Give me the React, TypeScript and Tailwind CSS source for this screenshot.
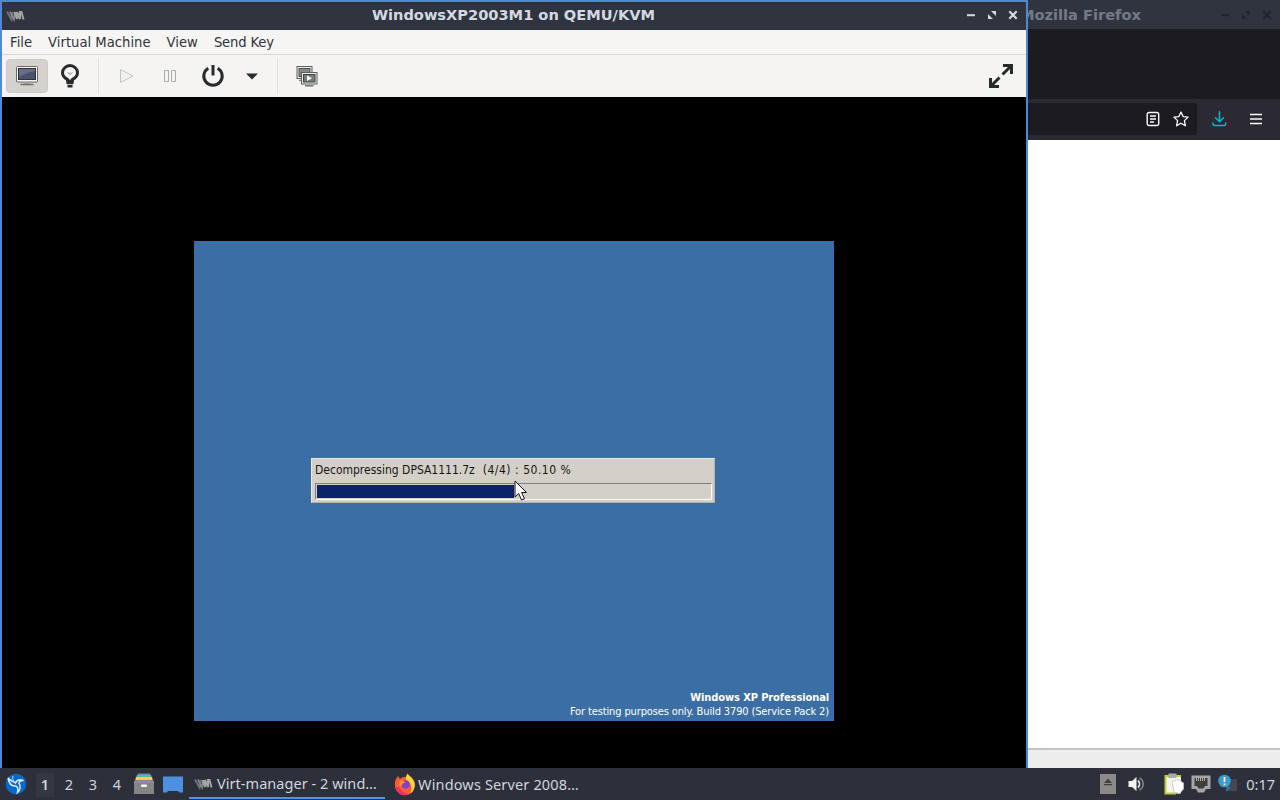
import React from 'react';

const workspaces = ['1', '2', '3', '4'];
const progress = 50.1;

function VmLogo() {
  return (
    <svg className="w-[20px] h-[12px] shrink-0" viewBox="0 0 20 12" fill="none">
      <path d="M1 1.5L5.5 9.5L7 2" stroke="#6f7175" strokeWidth="2" />
      <path d="M4 1.5L8 9.5L9.5 2" stroke="#85878a" strokeWidth="1.8" />
      <path d="M8.5 2L11 9V2L14 9V2H15.5L17.5 9.5" stroke="#a2a4a6" strokeWidth="2" />
    </svg>
  );
}

function WindowButtons({ color }: { color: string }) {
  return (
    <svg className="w-[54px] h-[14px] shrink-0" viewBox="0 0 54 14">
      <path d="M2 7.2H10" stroke={color} strokeWidth="2" />
      <path d="M26 3H31V8ZM23 6V11H28Z" fill={color} />
      <path d="M44.3 3.3L51.7 10.7M51.7 3.3L44.3 10.7" stroke={color} strokeWidth="2.2" />
    </svg>
  );
}

function MonitorIcon() {
  return (
    <svg className="w-[22px] h-[20px]" viewBox="0 0 22 20">
      <rect x="0.5" y="0.5" width="21" height="15.5" rx="1" fill="#f5f5f3" stroke="#676966" />
      <rect x="2.5" y="2.5" width="17" height="11" fill="#4b506b" stroke="#2d3040" />
      <path d="M3 3H19V5C13 6 8 8 3 11Z" fill="#686d88" />
      <path d="M8 16H14V18H8Z" fill="#a6a7a4" />
      <path d="M4.5 18.5H17.5" stroke="#737572" strokeWidth="1.6" />
    </svg>
  );
}

function BulbIcon() {
  return (
    <svg className="w-[20px] h-[24px]" viewBox="0 0 20 24" fill="none">
      <path d="M7.5 17V15.3C4.6 14 2.5 11.7 2.5 8.8A7.5 7.2 0 0 1 17.5 8.8C17.5 11.7 15.4 14 12.5 15.3V17Z" stroke="#272b2b" strokeWidth="3" strokeLinejoin="round" />
      <path d="M7.5 8.5L10 11L12.5 8.5L10 9.5Z" stroke="#a4a6a4" strokeWidth="0.8" />
      <path d="M6.5 19H13.5M7.5 22.2H12.5" stroke="#272b2b" strokeWidth="2.4" />
    </svg>
  );
}

function PowerIcon() {
  return (
    <svg className="w-[24px] h-[24px]" viewBox="0 0 24 24" fill="none">
      <path d="M7.3 4.2A9.2 9.2 0 1 0 16.7 4.2" stroke="#272b2b" strokeWidth="3" />
      <path d="M12 1V11.5" stroke="#272b2b" strokeWidth="3" />
    </svg>
  );
}

function ScreensIcon() {
  return (
    <svg className="w-[22px] h-[22px]" viewBox="0 0 22 22">
      <rect x="1" y="1.5" width="15" height="12" fill="#eeeeec" stroke="#5c5f5d" />
      <rect x="3" y="3.5" width="11" height="8" fill="#858987" stroke="#4f5250" />
      <path d="M3 15.5H6" stroke="#888a85" strokeWidth="1.5" />
      <rect x="5.5" y="7.5" width="15.5" height="11.5" fill="#eeeeec" stroke="#5c5f5d" />
      <rect x="7.5" y="9.5" width="11.5" height="7.5" fill="#777b79" stroke="#3f4341" />
      <path d="M11 10.5V16L16 13.2Z" fill="#fff" />
      <path d="M9 20.8H17.5" stroke="#747774" strokeWidth="1.5" />
    </svg>
  );
}

function Toolbar() {
  return (
    <div className="h-[42px] bg-[#f5f4f2] flex items-center pl-1 pr-[13px]">
      <div className="w-[42px] h-[34px] rounded-[4px] bg-[#d5d2ce] border border-[#cdc9c4] flex items-center justify-center">
        <MonitorIcon />
      </div>
      <div className="w-[44px] flex justify-center"><BulbIcon /></div>
      <div className="w-px h-[36px] ml-[6px] bg-[#e3e1de]" />
      <svg className="w-[16px] h-[16px] ml-[20px]" viewBox="0 0 16 16">
        <path d="M1.5 1.5V14.5L14 8Z" fill="#f1f1f0" stroke="#c5c5c3" />
      </svg>
      <svg className="w-[14px] h-[14px] ml-[28px]" viewBox="0 0 14 14">
        <path d="M1.5 1.5H5.5V12.5H1.5ZM8.5 1.5H12.5V12.5H8.5Z" fill="#f3f3f2" stroke="#aaaba9" />
      </svg>
      <div className="ml-[24px]"><PowerIcon /></div>
      <svg className="w-[12px] h-[7px] ml-[21px]" viewBox="0 0 12 7">
        <path d="M0 0.5H12L6 6.5Z" fill="#272b2b" />
      </svg>
      <div className="w-px h-[36px] ml-[19px] bg-[#e3e1de]" />
      <div className="ml-[18px]"><ScreensIcon /></div>
      <svg className="w-[24px] h-[24px] ml-auto" viewBox="0 0 24 24" fill="none" stroke="#272b2b" strokeWidth="3">
        <path d="M13.5 10.5L22 2M14 1.5H22.5V10M10.5 13.5L2 22M1.5 14V22.5H10" />
      </svg>
    </div>
  );
}

function DecompressDialog() {
  return (
    <div className="relative w-[404px] h-[45px] ml-[117px] bg-[#d4d0c8] border border-t-[#ece9e2] border-l-[#ece9e2] border-r-[#b5b2ab] border-b-[#b5b2ab] px-[3px] pt-[3px]">
      <div className="h-[16px] leading-[16px] text-[12px] text-[#151515] whitespace-pre font-['DejaVu_Sans_Condensed','DejaVu_Sans',sans-serif] [font-stretch:condensed]">
        <span>Decompressing DPSA1111.7z</span>
        <span className="tracking-[0.52px]">{'  (4/4) : 50.10 %'}</span>
      </div>
      <div className="h-[17px] w-[397px] mt-[5px] border border-t-[#808080] border-l-[#808080] border-r-white border-b-white p-px">
        <div className="h-full bg-[#0a246a]" style={{ width: `${progress}%` }} />
      </div>
      <svg className="absolute left-[202px] top-[21px] w-[14px] h-[22px]" viewBox="0 0 14 22">
        <path d="M1 1V17L4.7 13.5L7.5 20L10.5 18.8L7.6 12.5H12.5Z" fill="#fff" stroke="#111" />
      </svg>
    </div>
  );
}

function VirtualMachineWindow() {
  return (
    <div className="w-[1028px] h-full flex flex-col border-2 border-b-0 border-[#5088d4] bg-black">
      <div className="h-[28px] bg-[#2f343f] flex items-center pl-[4px] pr-[7px] shrink-0">
        <VmLogo />
        <div className="flex-1 text-center pl-[36px] -mt-[2px] text-[14.6px] leading-none font-bold text-[#d3dae3] whitespace-nowrap font-['DejaVu_Sans',sans-serif]">
          WindowsXP2003M1 on QEMU/KVM
        </div>
        <div className="-mt-[2px] flex"><WindowButtons color="#d3dae3" /></div>
      </div>
      <div className="h-[25px] shrink-0 bg-[#f6f5f4] border-b border-[#d9d7d4] flex items-center gap-4 pt-px pl-[8px] text-[13.2px] text-[#2e3436] font-['DejaVu_Sans',sans-serif]">
        <span>File</span>
        <span>Virtual Machine</span>
        <span>View</span>
        <span className="tracking-[-0.15px]">Send Key</span>
      </div>
      <Toolbar />
      <div className="flex-1 pt-[144px] pl-[192px]">
        <div className="w-[640px] h-[480px] bg-[#3b6ea5] pt-[217px] flex flex-col">
          <DecompressDialog />
          <div className="mt-auto pb-[2px] pr-[5px] text-right text-white text-[11px] leading-[14px] font-['DejaVu_Sans_Condensed','DejaVu_Sans',sans-serif] [font-stretch:condensed]">
            <div className="font-bold tracking-[-0.1px]">Windows XP Professional</div>
            <div className="tracking-[-0.13px]">For testing purposes only. Build 3790 (Service Pack 2)</div>
          </div>
        </div>
      </div>
    </div>
  );
}

function FirefoxWindow() {
  return (
    <div className="w-[252px] h-full flex flex-col overflow-hidden">
      <div className="h-[29px] bg-[#2f343f] flex items-center justify-between pr-[7px] shrink-0">
        <span className="-ml-[8px] text-[14.6px] font-bold text-[#747b87] whitespace-nowrap font-['DejaVu_Sans',sans-serif]">Mozilla Firefox</span>
        <WindowButtons color="#20242d" />
      </div>
      <div className="h-[70px] bg-[#1c1b22]" />
      <div className="h-[41px] bg-[#2b2a33] flex items-center pb-[2px]">
        <div className="w-[169px] h-[32px] rounded-r-[3px] bg-[#1c1b22] flex items-center justify-end pr-[8px] gap-[13px]">
          <svg className="w-[14px] h-[16px]" viewBox="0 0 14 16" fill="none" stroke="#fbfbfe" strokeWidth="1.4">
            <rect x="1.2" y="1.5" width="11.5" height="13" rx="2" />
            <path d="M4 5H10M4 8H10M4 11H8" />
          </svg>
          <svg className="w-[16px] h-[16px]" viewBox="0 0 16 16" fill="none" stroke="#fbfbfe" strokeWidth="1.3" strokeLinejoin="round">
            <path d="M8 1L10.1 5.6L15.1 6.1L11.4 9.6L12.4 14.8L8 12.2L3.6 14.8L4.6 9.6L0.9 6.1L5.9 5.6Z" />
          </svg>
        </div>
        <svg className="w-[16px] h-[16px] ml-[14px]" viewBox="0 0 16 16" fill="none" stroke="#08b7d0" strokeWidth="1.5" strokeLinecap="round" strokeLinejoin="round">
          <path d="M8.5 0.7V10.5M4.5 6.8L8.5 10.7L12.5 6.8M2 12V13C2 14 2.7 14.5 3.5 14.5H13.2C14 14.5 14.7 14 14.7 13V12" />
        </svg>
        <svg className="w-[14px] h-[14px] ml-[22px]" viewBox="0 0 14 14" stroke="#fbfbfe" strokeWidth="1.4">
          <path d="M1 2.5H13M1 7H13M1 11.5H13" />
        </svg>
      </div>
      <div className="flex-1 bg-white" />
      <div className="h-[20px] bg-[#ededed] border-t-2 border-[#c3c3c3]" />
    </div>
  );
}

function Taskbar() {
  return (
    <div className="h-[32px] bg-[#2d303b] flex items-center pl-[5px] pr-[5px] text-[#d0d5df] text-[14.5px] font-['Noto_Sans',sans-serif]">
      <svg className="w-[22px] h-[22px]" viewBox="0 0 22 22">
        <circle cx="11" cy="11" r="10.3" fill="#0969c8" />
        <path d="M3 5C5 8 8 8 10.5 10C11.5 7.5 14 6 18.5 7.5C15.5 7.5 14 8.5 14 10.5C16 13 15.5 17 12.5 19.5C13.3 16 12.5 13.5 10.5 13C6.5 13.5 4 10 3 5Z" fill="none" stroke="#d9eafa" strokeWidth="1.5" />
        <path d="M10 9.5C8 8 7 5.5 8 3" stroke="#b8d6f2" fill="none" />
      </svg>
      <div className="flex ml-[9px] pt-px">
        {workspaces.map((name, i) => (
          <div key={name} className={`w-[18px] h-[24px] mr-[6px] flex items-center justify-center ${i === 0 ? 'bg-[#353842] font-semibold' : ''}`}>{name}</div>
        ))}
      </div>
      {/* File manager */}
      <svg className="w-[20px] h-[22px] ml-[2px]" viewBox="0 0 20 22">
        <path d="M4 0.5H16L17 3H3Z" fill="#5294c8" />
        <path d="M3 2H17L18 5H2Z" fill="#63b880" />
        <path d="M2 4H18L19 8H1Z" fill="#f0d252" />
        <path d="M1 7H19L20 9V21H0V9Z" fill="#858585" />
        <path d="M0 9H20" stroke="#9a9a9a" />
        <rect x="7" y="11.5" width="6" height="2.5" rx="1" fill="#f4f4f4" />
      </svg>
      {/* Show desktop */}
      <svg className="w-[20px] h-[17px] ml-[9px]" viewBox="0 0 20 17">
        <path d="M0 0.5H20V16.5H16L15 15H5L4 16.5H0Z" fill="#4d8fe0" />
      </svg>
      <div className="w-[196px] h-[30px] ml-[6px] flex items-center pl-[5px] pt-[2px] border-b-2 border-[#5294e2]">
        <VmLogo />
        <span className="ml-[3px] whitespace-nowrap tracking-[0.04px]">Virt-manager - 2 wind…</span>
      </div>
      <div className="flex items-center ml-[9px]">
        <svg className="w-[22px] h-[23px]" viewBox="0 0 22 23">
          <path d="M2 6L4 3L6 6C8 4 10 4 12 4L13.5 0.5C15 3 18 4 20 8C22 13 20 18 16.5 20.5C12 23.5 6 22.5 2.8 18C0.3 14 0.5 9 2 6Z" fill="#ff5a36" />
          <path d="M12 4L13.5 0.5C15 3 18 4 20 8C22 13 20 18 16.5 20.5C18 15 18 9 12 7Z" fill="#ffd43a" />
          <path d="M1.5 14C3 21 9 24 16.5 20.5C14 22 7 19 5 14Z" fill="#f52d68" />
          <circle cx="11.5" cy="11.5" r="4.3" fill="#8341c8" />
          <path d="M5 8C8 6 11 8 11 10C8.5 10 7 12 8 14C5 13 4.5 10 5 8Z" fill="#ff8b2c" />
        </svg>
        <span className="ml-[2px] pt-[2px] whitespace-nowrap tracking-[0.15px]">Windows Server 2008…</span>
      </div>
      {/* Tray */}
      <div className="ml-auto flex items-center">
        <svg className="w-[16px] h-[20px]" viewBox="0 0 16 20">
          <rect width="16" height="20" fill="#8b8b8b" />
          <path d="M4 9L8 4.5L12 9ZM4 10H12V11.2H4Z" fill="#404040" />
        </svg>
        <svg className="w-[17px] h-[16px] ml-[12px]" viewBox="0 0 17 16" fill="none">
          <path d="M0.5 5H4L8.5 1V15L4 11H0.5Z" fill="#f4f4f4" />
          <path d="M10 4.5C12 6.5 12 9.5 10 11.5" stroke="#e6e6e6" strokeWidth="1.8" />
          <path d="M11.5 2C16.5 5 16.5 11 11.5 14" stroke="#7d8088" strokeWidth="1.6" />
        </svg>
        <svg className="w-[20px] h-[22px] ml-[19px]" viewBox="0 0 20 22">
          <path d="M1 2.5H17V20.5H1Z" fill="#f5f5ef" />
          <path d="M17 3H1.5V20.5H12" fill="none" stroke="#c1ce36" strokeWidth="2" />
          <rect x="4.5" y="0.5" width="8" height="4.5" fill="#aaa" />
          <path d="M8 8.5L14 6.5L19.5 10V16L15.5 20.5L10 19Z" fill="#fff" stroke="#c3c3c3" strokeWidth="0.8" />
        </svg>
        <svg className="w-[20px] h-[18px] ml-[7px]" viewBox="0 0 20 18">
          <path d="M0.5 0.5H19.5V14H15L13 17.5H7L5 14H0.5Z" fill="#a6a6a6" />
          <path d="M3.5 3H16.5V11H14L12.5 13.5H7.5L6 11H3.5Z" fill="#3e3e3e" />
          <path d="M5.5 3V6M7.5 3V6M9.5 3V6M11.5 3V6M13.5 3V6" stroke="#d6d4b0" strokeWidth="0.8" />
        </svg>
        <svg className="w-[20px] h-[20px] ml-[7px]" viewBox="0 0 20 20">
          <rect x="8" y="5" width="11" height="12" fill="#454852" />
          <path d="M8 18L9 13H13Z" fill="#2580bb" />
          <circle cx="6.5" cy="7" r="6.3" fill="#3d9ad5" />
          <path d="M6.5 3V8M6.5 9.5V11.3" stroke="#fff" strokeWidth="1.7" />
        </svg>
        <span className="ml-[8px] pt-px">0:17</span>
      </div>
    </div>
  );
}

export default function App() {
  return (
    <div className="w-[1280px] h-[800px] flex flex-col overflow-hidden bg-black">
      <div className="h-[768px] flex">
        <VirtualMachineWindow />
        <FirefoxWindow />
      </div>
      <Taskbar />
    </div>
  );
}
